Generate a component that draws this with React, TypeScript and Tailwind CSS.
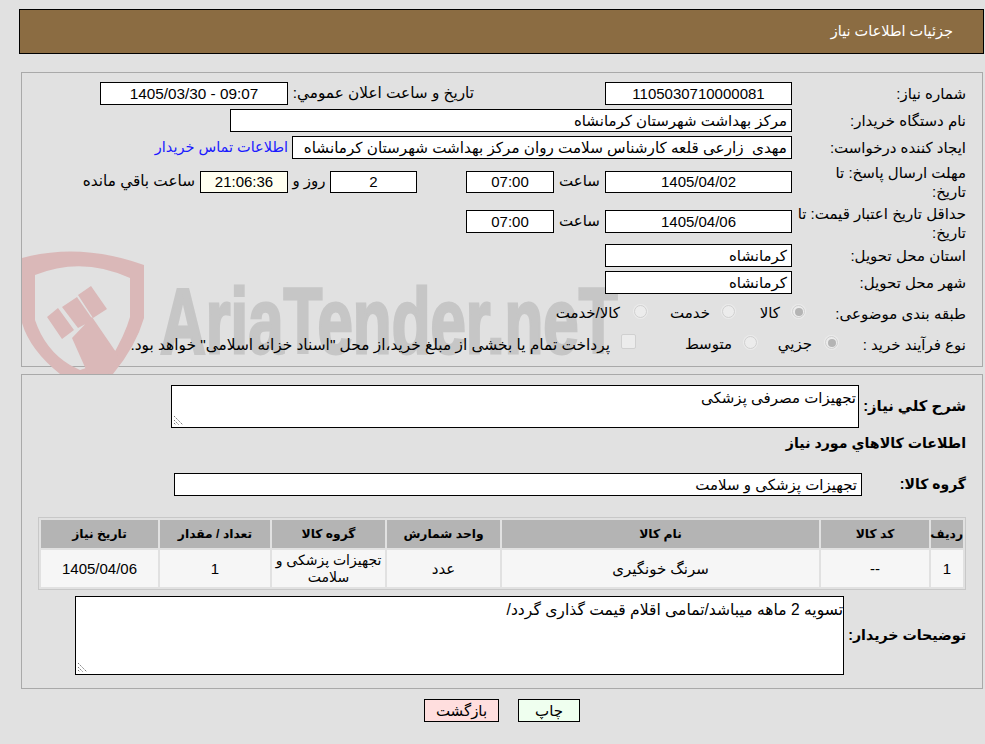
const FONT = "font-['Liberation_Sans','DejaVu_Sans',sans-serif]";

function Field({ className = "", bg = "bg-white", children }: { className?: string; bg?: string; children?: React.ReactNode }) {
    return (
        <div className={`h-[23px] border border-black flex items-center justify-center text-[15px] leading-none whitespace-nowrap overflow-hidden ${bg} ${className}`}>
            {children}
        </div>
    );
}

function Label({ children, className = "w-[174px]" }: { children: React.ReactNode; className?: string }) {
    return <div className={`shrink-0 text-[15px] leading-[19px] ${className}`}>{children}</div>;
}

function Radio({ checked = false }: { checked?: boolean }) {
    return (
        <span className="block w-[13px] h-[13px] -translate-y-[2px] rounded-full border border-[#d0d0d0] bg-[#ececec] ring-1 ring-[#ebebeb] flex items-center justify-center">
            {checked && <span className="w-[8px] h-[8px] rounded-full bg-[#b4b4b4]" />}
        </span>
    );
}

function Grip() {
    return (
        <svg className="absolute left-[1px] bottom-[1px]" width="11" height="11" viewBox="0 0 11 11">
            <path d="M1 1 L10 10 M1 5 L6 10 M1 8 L3 10" stroke="#777" strokeWidth="1" strokeDasharray="1.5 1" fill="none" />
        </svg>
    );
}

function Watermark() {
    return (
        <div className="absolute left-[-2px] top-[177px] w-[620px] h-[124px] overflow-hidden pointer-events-none" dir="ltr">
            <svg className="absolute left-0 top-0" width="126" height="124" viewBox="0 0 126 124">
                <path d="M2 8 Q60 -8 124 15 L124 68 Q116 96 93 124 L40 124 Q10 100 2 73 Z M15 25 L15 70 Q25 100 50 115 L60 120 L90 110 Q105 85 110 67 L110 28 Q62 6 15 25 Z" fill="#dab8b8" fillRule="evenodd" />
                <path d="M27 67 L38 58 L54 80 L42 89 Z M42 57 L57 47 L73 70 L58 78 Z M58 45 L71 36 L87 59 L73 68 Z M52 88 L72 67 L98 105 L88 124 L68 124 Z" fill="#dab8b8" />
            </svg>
            <span className="absolute left-[140px] top-[13px] text-[#c6c6c6] [-webkit-text-stroke:3px_#c6c6c6] font-bold text-[92px] leading-[116px] whitespace-nowrap origin-left scale-x-[0.69] font-['Liberation_Sans',sans-serif]">AriaTender.neT</span>
        </div>
    );
}

export default function App() {
    return (
        <div dir="rtl" className={`w-[985px] h-[744px] bg-[#e1e1e1] text-black pt-[9px] overflow-hidden ${FONT}`}>
            <div className="ml-[19px] mr-[1px] h-[45px] bg-[#8b6c42] border border-black flex items-center pr-[30px] pt-[1px] text-white text-[14.5px]">
                جزئیات اطلاعات نیاز
            </div>

            <div className="relative ml-[21px] mr-[2px] mt-[18px] h-[295px] border border-[#a9a9a9] pt-[9px] pr-[16px]">
                <Watermark />
                <div className="relative flex flex-col">
                    <div className="flex items-center h-[23px]">
                        <Label>شماره نیاز:</Label>
                        <Field className="w-[187px]">1105030710000081</Field>
                        <div className="w-[131px] shrink-0" />
                        <span className="text-[15.3px] whitespace-nowrap w-[186px] shrink-0">تاریخ و ساعت اعلان عمومي:</span>
                        <Field className="w-[188px]"><span dir="ltr" className="text-[15.3px]">1405/03/30 - 09:07</span></Field>
                    </div>
                    <div className="flex items-center h-[23px] mt-[4px]">
                        <Label>نام دستگاه خریدار:</Label>
                        <Field className="w-[562px] justify-start pr-[4px]">مرکز بهداشت شهرستان کرمانشاه</Field>
                    </div>
                    <div className="flex items-center h-[23px] mt-[4px]">
                        <Label>ایجاد کننده درخواست:</Label>
                        <Field className="w-[500px] justify-start pr-[4px]"><span className="text-[15.2px]">مهدی &nbsp;زارعی قلعه کارشناس سلامت روان مرکز بهداشت شهرستان کرمانشاه</span></Field>
                        <span className="text-[14.5px] text-[#1a1aff] mr-[4px] whitespace-nowrap">اطلاعات تماس خریدار</span>
                    </div>
                    <div className="flex items-center h-[38px] mt-[4px]">
                        <Label>مهلت ارسال پاسخ: تا<br />تاریخ:</Label>
                        <div className="flex items-center -mt-[1px]">
                            <Field className="w-[187px] !h-[22px]">1405/04/02</Field>
                            <span className="w-[51px] text-center text-[15px]">ساعت</span>
                            <Field className="w-[88px] !h-[22px]">07:00</Field>
                            <div className="w-[49px]" />
                            <Field className="w-[87px] !h-[22px]">2</Field>
                            <span className="w-[42px] text-center text-[15px]">روز و</span>
                            <Field className="w-[88px] !h-[22px]" bg="bg-[#fffff0]">21:06:36</Field>
                            <span className="mr-[5px] text-[15.3px] whitespace-nowrap">ساعت باقي مانده</span>
                        </div>
                    </div>
                    <div className="flex items-center h-[38px] mt-[3px]">
                        <Label>حداقل تاریخ اعتبار قیمت: تا<br />تاریخ:</Label>
                        <div className="flex items-center -mt-[4px]">
                            <Field className="w-[187px]">1405/04/06</Field>
                            <span className="w-[51px] text-center text-[15px]">ساعت</span>
                            <Field className="w-[88px]">07:00</Field>
                        </div>
                    </div>
                    <div className="flex items-center h-[23px] mt-[2px]">
                        <Label>استان محل تحویل:</Label>
                        <Field className="w-[187px] justify-start pr-[4px]">کرمانشاه</Field>
                    </div>
                    <div className="flex items-center h-[23px] mt-[4px]">
                        <Label>شهر محل تحویل:</Label>
                        <Field className="w-[187px] justify-start pr-[4px]">کرمانشاه</Field>
                    </div>
                    <div className="flex items-center h-[23px] mt-[8px] text-[15px]">
                        <Label className="w-[161px]">طبقه بندی موضوعی:</Label>
                        <div className="w-[25px]"><Radio checked /></div>
                        <span className="w-[45px]">کالا</span>
                        <div className="w-[25px]"><Radio /></div>
                        <span className="w-[63px]">خدمت</span>
                        <div className="w-[27px]"><Radio /></div>
                        <span className="whitespace-nowrap">کالا/خدمت</span>
                    </div>
                    <div className="flex items-center h-[23px] mt-[8px] text-[15px]">
                        <Label className="w-[128px]">نوع فرآیند خرید :</Label>
                        <div className="w-[26px]"><Radio checked /></div>
                        <span className="w-[55px]">جزیي</span>
                        <div className="w-[25px]"><Radio /></div>
                        <span className="w-[96px]">متوسط</span>
                        <span className="w-[15px] h-[15px] -translate-y-[3px] rounded-[2px] border border-[#d0d0d0] bg-[#ececec] ml-[11px]" />
                        <span className="whitespace-nowrap text-[15.4px]">پرداخت تمام یا بخشی از مبلغ خرید،از محل "اسناد خزانه اسلامی" خواهد بود.</span>
                    </div>
                </div>
            </div>

            <div className="ml-[21px] mr-[2px] mt-[7px] h-[315px] border border-[#a9a9a9] pt-[10px] pr-[16px]">
                <div className="flex items-center">
                    <div className="w-[107px] shrink-0 font-bold text-[14.8px] whitespace-nowrap">شرح کلي نیاز:</div>
                    <div className="relative w-[688px] h-[43px] border border-black bg-white text-[15px] leading-[19px] pr-[2px] pt-[2px]">
                        تجهیزات مصرفی پزشکی
                        <Grip />
                    </div>
                </div>
                <div className="font-bold text-[14.2px] leading-[20px] mt-[5px]">اطلاعات کالاهاي مورد نیاز</div>
                <div className="flex items-center mt-[20px]">
                    <div className="w-[104px] shrink-0 font-bold text-[14px]">گروه کالا:</div>
                    <Field className="w-[688px] justify-start pr-[4px]">تجهیزات پزشکی و سلامت</Field>
                </div>
                <table className="mt-[21px] w-[928px] table-fixed border border-[#c8c8c8] border-separate border-spacing-[2px] text-center text-[15px]">
                    <thead>
                        <tr className="h-[28px] bg-[#b4b4b4] font-bold text-[12.3px]">
                            <th className="w-[32px] p-0">ردیف</th>
                            <th className="w-[108px] p-0">کد کالا</th>
                            <th className="w-[317px] p-0">نام کالا</th>
                            <th className="w-[113px] p-0">واحد شمارش</th>
                            <th className="w-[113px] p-0">گروه کالا</th>
                            <th className="w-[110px] p-0">تعداد / مقدار</th>
                            <th className="w-[117px] p-0">تاریخ نیاز</th>
                        </tr>
                    </thead>
                    <tbody>
                        <tr className="h-[37px] bg-[#f6f6f6] leading-[17px]">
                            <td className="p-0">1</td>
                            <td className="p-0">--</td>
                            <td className="p-0">سرنگ خونگیری</td>
                            <td className="p-0">عدد</td>
                            <td className="p-0 text-[14px] whitespace-nowrap">تجهیزات پزشکی و<br />سلامت</td>
                            <td className="p-0">1</td>
                            <td className="p-0">1405/04/06</td>
                        </tr>
                    </tbody>
                </table>
                <div className="flex items-center mt-[6px]">
                    <div className="w-[122px] shrink-0 font-bold text-[14.2px] whitespace-nowrap">توضیحات خریدار:</div>
                    <div className="relative w-[769px] h-[79px] border border-black bg-white text-[15.6px] leading-[19px] pt-[3px]">
                        تسویه 2 ماهه میباشد/تمامی اقلام قیمت گذاری گردد/
                        <Grip />
                    </div>
                </div>
            </div>

            <div className="flex justify-center gap-[19px] mt-[10px] pl-[19px]">
                <button className="w-[62px] h-[23px] border border-black bg-[#efffef] text-[15px] leading-none">چاپ</button>
                <button className="w-[75px] h-[23px] border border-black bg-[#ffdede] text-[15px] leading-none">بازگشت</button>
            </div>
        </div>
    );
}
